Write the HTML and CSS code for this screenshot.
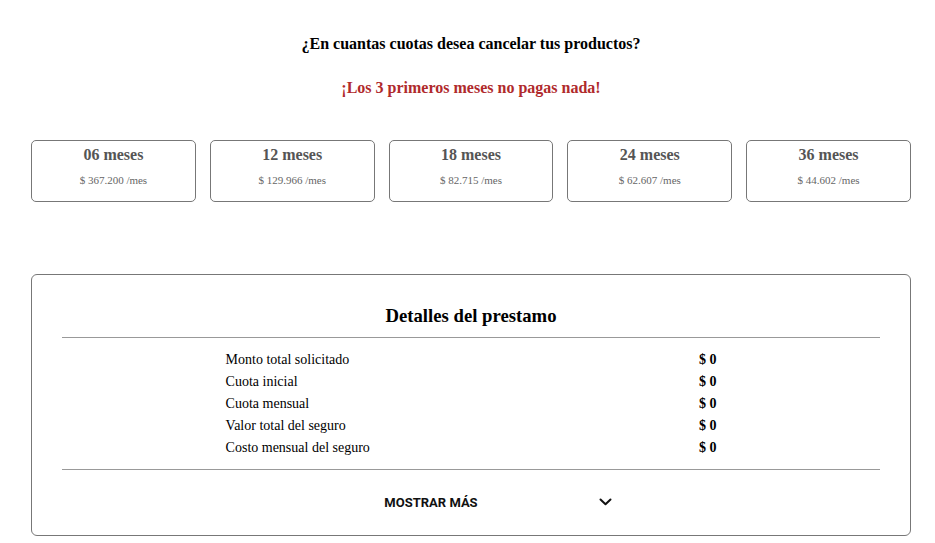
FILE: index.html
```html
<!DOCTYPE html>
<html lang="es">
<head>
<meta charset="utf-8">
<title>Cuotas</title>
<link rel="stylesheet" href="styles.css">
</head>
<body>
<main class="page">
  <h2 class="question">¿En cuantas cuotas desea cancelar tus productos?</h2>
  <p class="promo">¡Los 3 primeros meses no pagas nada!</p>

  <div class="plans">
    <div class="plan"><div class="plan-title">06 meses</div><div class="plan-price">$ 367.200 /mes</div></div>
    <div class="plan"><div class="plan-title">12 meses</div><div class="plan-price">$ 129.966 /mes</div></div>
    <div class="plan"><div class="plan-title">18 meses</div><div class="plan-price">$ 82.715 /mes</div></div>
    <div class="plan"><div class="plan-title">24 meses</div><div class="plan-price">$ 62.607 /mes</div></div>
    <div class="plan"><div class="plan-title">36 meses</div><div class="plan-price">$ 44.602 /mes</div></div>
  </div>

  <section class="details">
    <h3 class="details-title">Detalles del prestamo</h3>
    <div class="rule"></div>
    <div class="rows">
      <div class="row"><span>Monto total solicitado</span><strong>$ 0</strong></div>
      <div class="row"><span>Cuota inicial</span><strong>$ 0</strong></div>
      <div class="row"><span>Cuota mensual</span><strong>$ 0</strong></div>
      <div class="row"><span>Valor total del seguro</span><strong>$ 0</strong></div>
      <div class="row"><span>Costo mensual del seguro</span><strong>$ 0</strong></div>
    </div>
    <div class="rule rule-bottom"></div>
    <div class="more">
      <button class="more-btn" type="button">
        <span>MOSTRAR MÁS</span>
        <svg class="chev" width="13" height="8" viewBox="0 0 13 8" aria-hidden="true"><path d="M1.5 1.5 L6.5 6.3 L11.5 1.5" fill="none" stroke="#111" stroke-width="2" stroke-linecap="round" stroke-linejoin="round"/></svg>
      </button>
    </div>
  </section>
</main>
</body>
</html>
```

FILE: styles.css
```css
html, body {
  margin: 0;
  padding: 0;
  background: #fff;
}
body {
  font-family: "Liberation Serif", "Times New Roman", serif;
  color: #000;
}
.page {
  padding: 35px 24px 0 31px;
  width: 880px;
}
.question {
  margin: 0;
  font-size: 16px;
  line-height: 18px;
  font-weight: bold;
  text-align: center;
}
.promo {
  margin: 26px 0 0;
  font-size: 16px;
  line-height: 18px;
  font-weight: bold;
  text-align: center;
  color: #b02a2c;
}
.plans {
  margin-top: 43px;
  display: flex;
  gap: 14px;
}
.plan {
  flex: 1;
  box-sizing: border-box;
  height: 62px;
  border: 1px solid #777;
  border-radius: 5px;
  padding-top: 4px;
  text-align: center;
}
.plan-title {
  font-size: 16px;
  line-height: 20px;
  font-weight: bold;
  color: #555;
}
.plan-price {
  margin-top: 8px;
  font-size: 11px;
  line-height: 14px;
  color: #666;
}
.details {
  margin-top: 72px;
  box-sizing: border-box;
  height: 262px;
  border: 1px solid #777;
  border-radius: 6px;
  padding: 30px 30px 0;
}
.details-title {
  margin: 0;
  font-size: 18.72px;
  line-height: 22px;
  font-weight: bold;
  text-align: center;
}
.rule {
  margin-top: 10px;
  border-top: 1px solid #999;
}
.rule-bottom {
  margin-top: 10px;
}
.rows {
  width: 60%;
  margin: 11px auto 0;
}
.row {
  display: flex;
  justify-content: space-between;
  font-size: 14px;
  line-height: 22px;
}
.row strong {
  font-weight: bold;
}
.more {
  height: 64px;
  display: flex;
  align-items: center;
  justify-content: center;
}
.more-btn {
  margin-left: 54px;
  display: flex;
  align-items: center;
  gap: 121px;
  background: none;
  border: 0;
  padding: 0;
  font-family: Roboto, "Liberation Sans", sans-serif;
  font-weight: bold;
  font-size: 13px;
  color: #111;
  cursor: pointer;
}
.chev {
  display: block;
}
```
